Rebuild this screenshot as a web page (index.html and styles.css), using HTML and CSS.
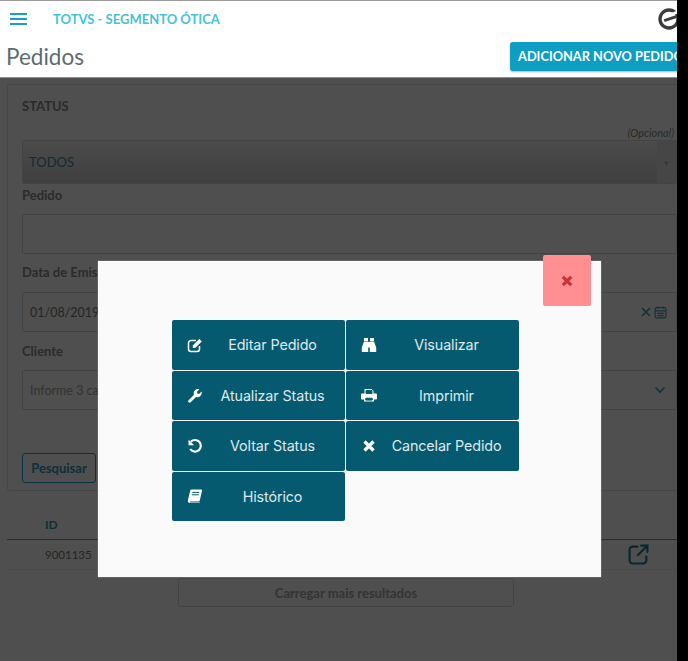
FILE: index.html
```html
<!DOCTYPE html>
<html lang="pt">
<head>
<meta charset="utf-8">
<title>Pedidos</title>
<link rel="stylesheet" href="styles.css">
</head>
<body>
<div class="page">
  <header class="top">
    <div class="brandbar">
      <svg class="burger" viewBox="0 0 17 12"><path d="M0 1h17M0 6h17M0 11h17"/></svg>
      <span class="brand">TOTVS - SEGMENTO ÓTICA</span>
      <svg class="logo" viewBox="0 0 20 20"><circle cx="10" cy="10" r="7.500"/><path class="logo-gap" d="M11 6.500 19 3.500"/><path class="logo-bar" d="M6 11.300 16 8"/></svg>
    </div>
    <div class="titlebar">
      <h1 class="title">Pedidos</h1>
      <button class="add">ADICIONAR NOVO PEDIDO</button>
    </div>
  </header>
  <main class="content">
    <section class="card">
      <div class="label status">STATUS</div>
      <div class="optional">(Opcional)</div>
      <div class="select"><span>TODOS</span><i class="select-btn">▾</i></div>
      <div class="label l-pedido">Pedido</div>
      <div class="input i-pedido"></div>
      <div class="label l-data">Data de Emissão</div>
      <div class="input i-data">01/08/2019
        <span class="date-icons">
          <svg viewBox="0 0 10 10"><path d="M1 1 9 9M9 1 1 9"/></svg>
          <svg class="cal" viewBox="0 0 12 12"><rect x="1" y="1.500" width="10" height="9.500" rx="1.500"/><path d="M1 4.500h10M3 6.800h6M3 8.800h6M3.500 .5v2M8.500 .5v2"/></svg>
        </span>
      </div>
      <div class="label l-cliente">Cliente</div>
      <div class="input i-cliente placeholder">Informe 3 caracteres
        <svg class="chev" viewBox="0 0 12 8"><path d="M1.500 1.500 6 6l4.500-4.500"/></svg>
      </div>
      <button class="search">Pesquisar</button>
    </section>
    <section class="table">
      <div class="thead">ID</div>
      <div class="trow">9001135
        <svg class="open" viewBox="0 0 20 20"><path d="M9 2.500H4.500a3 3 0 0 0-3 3v10a3 3 0 0 0 3 3h10a3 3 0 0 0 3-3V12"/><path d="M9.500 10.500 18 2M12.500 1.500H18.500V7.500"/></svg>
      </div>
    </section>
    <button class="more">Carregar mais resultados</button>
  </main>
  <div class="overlay"></div>
  <div class="modal">
    <button class="close"><svg viewBox="0 0 10 10"><path d="M1.500 1.500 8.500 8.500M8.500 1.500 1.500 8.500"/></svg></button>
    <div class="actions">
      <button class="action">
        <svg class="ico" viewBox="0 0 16 16"><path class="line" d="M12.500 9v3a2.500 2.500 0 0 1-2.500 2.500H4A2.500 2.500 0 0 1 1.500 12V6A2.500 2.500 0 0 1 4 3.500h5"/><path d="M6 8.200 12.300 2l2.500 2.500L8.500 10.700 5.700 11z"/></svg>
        <span>Editar Pedido</span></button>
      <button class="action">
        <svg class="ico" viewBox="0 0 16 16"><path d="M3 1h4v3H3zM9 1h4v3H9zM3 4.500H7.200V15H.8V10.500zM8.800 4.500H13L15.200 10.500V15H8.800zM7 5h2v5.500H7z"/></svg>
        <span>Visualizar</span></button>
      <button class="action">
        <svg class="ico" viewBox="0 0 16 16"><path d="M1.500 13.300 7 7.700A4.200 4.200 0 0 1 12.400 2.300L10 4.700l.4 1.700 1.700.5 2.400-2.300A4.300 4.300 0 0 1 9 10L3.700 15.300a1.500 1.500 0 0 1-2.200-2z"/></svg>
        <span>Atualizar Status</span></button>
      <button class="action">
        <svg class="ico" viewBox="0 0 16 16"><path d="M3.500 6.500V2h7l2 2v2.500H15a1 1 0 0 1 1 1V11.500a1 1 0 0 1-1 1h-2V14.500H3V12.500H1a1 1 0 0 1-1-1V7.500a1 1 0 0 1 1-1z"/><path class="cut" d="M5 3.500h6v3H5zM4.800 11.200h6.400v1.900H4.800z"/></svg>
        <span>Imprimir</span></button>
      <button class="action">
        <svg class="ico stroke" viewBox="0 0 16 16"><path d="M3.800 3.800A5.800 5.800 0 1 1 3.200 11"/><path class="fillhead" d="M1.500 1.700 7.200 7.200 1.500 7.200z"/></svg>
        <span>Voltar Status</span></button>
      <button class="action">
        <svg class="ico stroke-x" viewBox="0 0 16 16"><path d="M3.500 3.500 12.500 12.500M12.500 3.500 3.500 12.500"/></svg>
        <span>Cancelar Pedido</span></button>
      <button class="action">
        <svg class="ico" viewBox="0 0 16 16"><path d="M4.500 1.500H14a1 1 0 0 1 1 1.200L12.800 12.500a1.500 1.500 0 0 1-1.400 1H3.300c-.7 0-.8.900 0 .9H13l-.2.600H3c-1.800 0-2.500-1.700-2-3.300L3.200 2.700a1.500 1.500 0 0 1 1.300-1.200z"/><path class="cut" d="M5.300 4.400h7M4.800 6.800h7"/></svg>
        <span>Histórico</span></button>
    </div>
  </div>
</div>
</body>
</html>
```
FILE: styles.css
```css
* { box-sizing: border-box; }
html, body { margin: 0; height: 100%; background: #000; }
body { font-family: "Lato", "Open Sans", sans-serif; overflow: hidden; }
button { font-family: inherit; cursor: pointer; }

.page {
  position: relative;
  width: 677px;
  height: 661px;
  overflow: hidden;
  background: #fff;
}

.top {
  position: relative;
  z-index: 2;
  height: 77px;
  background: #fff;
  border-top: 1px solid #9a9a9a;
  box-shadow: 0 1px 0 #8d8d8d;
}
.brandbar { display: flex; align-items: center; height: 35px; padding-left: 10px; }
.burger { width: 17px; height: 12px; fill: none; stroke: #1a9fc4; stroke-width: 2; }
.brand { margin-left: 26px; font-size: 13px; font-weight: 700; color: #45c3d6; }
.logo {
  margin-left: auto; margin-right: -4px;
  width: 24px; height: 24px; fill: none; stroke: #3c3c3c; stroke-width: 2.800;
}
.logo .logo-gap { stroke: #fff; stroke-width: 2.500; }
.logo .logo-bar { stroke-width: 2.400; }
.titlebar { display: flex; align-items: center; height: 40px; padding-left: 6px; }
.title { margin: 0; font-size: 22.500px; font-weight: 400; color: #5d6b70; }
.add {
  margin-left: auto; margin-right: -30px;
  width: 197px; height: 29px;
  padding: 0 0 0 8px;
  border: 0; border-radius: 3px;
  background: #0e9ec2;
  color: #fff;
  font-size: 12.800px; font-weight: 700;
  text-align: left;
  white-space: nowrap;
  box-shadow: 0 1px 2px rgba(0,0,0,.3);
}

.content { padding: 7px 0 0 7px; width: 720px; }
.card {
  width: 713px; height: 407px;
  padding: 13px 0 0 14px;
  border: 1px solid #e0e0e0;
  border-radius: 2px;
}
.label { font-size: 13px; font-weight: 700; color: #8a8a8a; line-height: 16px; }
.optional {
  width: 652px; margin-top: 13px;
  text-align: right; font-size: 11px; font-style: italic; line-height: 12px; color: #8a8a8a;
}
.select {
  display: flex; align-items: center; justify-content: space-between;
  width: 655px; height: 44px; margin-top: 1px; padding-left: 6px;
  border: 1px solid #d8d8d8; border-radius: 2px;
  background: linear-gradient(#f2f2f2, #ccc);
  font-size: 13px; color: #3f8aa5;
}
.select-btn {
  width: 19px; height: 100%;
  display: flex; align-items: center; justify-content: center;
  background: #e0e2e6; color: #b0b0b0; font-style: normal; font-size: 9px;
}
.input {
  display: flex; align-items: center;
  width: 655px; height: 40px; padding-left: 7px;
  border: 1px solid #d8d8d8; border-radius: 2px;
  font-size: 12.500px; color: #777;
}
.l-pedido { margin-top: 3px; }
.i-pedido { margin-top: 11px; }
.l-data { margin-top: 10px; }
.i-data { margin-top: 12px; }
.l-cliente { margin-top: 11px; }
.i-cliente { margin-top: 11px; }
.placeholder { color: #a4a4a4; }
.date-icons { margin-left: auto; margin-right: 9px; display: flex; align-items: center; gap: 3px; }
.date-icons svg { width: 10px; height: 10px; fill: none; stroke: #3f9db8; stroke-width: 1.600; }
.date-icons .cal { width: 13px; height: 13px; stroke-width: 1.100; }
.chev {
  margin-left: auto; margin-right: 10px;
  width: 12px; height: 8px; fill: none; stroke: #3f9db8; stroke-width: 1.600;
}
.search {
  display: block;
  margin-top: 43px;
  width: 74px; height: 30px; padding: 0;
  border: 1px solid #16a5c8; border-radius: 3px;
  background: #fff;
  color: #2e9ab6;
  font-size: 13px; font-weight: 700;
}

.table { width: 680px; margin-top: 14px; }
.thead {
  height: 35px; padding: 13px 0 0 38px;
  border-bottom: 1px solid #2faec9;
  font-size: 12px; font-weight: 700; color: #2e9ab6; line-height: 14px;
}
.trow {
  position: relative;
  display: flex; align-items: center;
  height: 30px; padding-left: 38px;
  border-bottom: 1px solid #efefef;
  font-size: 11.500px; color: #777;
}
.open {
  position: absolute; left: 621px; top: 4px;
  width: 21px; height: 21px; fill: none; stroke: #0f7f9d; stroke-width: 2; stroke-linecap: round;
}
.more {
  display: block;
  width: 336px; height: 29px; margin: 8px 0 0 171px; padding: 0;
  border: 1px solid #d8d8d8; border-radius: 3px;
  background: #fff;
  color: #a8a8a8;
  font-size: 13px; font-weight: 700;
}

.overlay {
  position: absolute; inset: 77px 0 0 0;
  z-index: 1;
  background: rgba(0,0,0,.69);
}

.modal {
  position: absolute; left: 98px; top: 261px;
  z-index: 3;
  width: 503px; height: 316px;
  padding: 59px 0 0 74px;
  background: #fafafa;
  box-shadow: 0 0 1px rgba(255,255,255,.7);
}
.close {
  position: absolute; left: 445px; top: -6px;
  display: flex; align-items: center; justify-content: center;
  width: 48px; height: 51px; padding: 0;
  border: 0; border-radius: 2px;
  background: #ff8f90;
}
.close svg { width: 12px; height: 12px; fill: none; stroke: #c93138; stroke-width: 2.600; }

.actions {
  display: grid;
  grid-template-columns: 173px 173px;
  grid-auto-rows: 49.500px;
  gap: 1px;
}
.action {
  display: flex; align-items: center;
  padding: 0 15px;
  border: 0; border-radius: 2px;
  background: #055a70;
  color: #dfe9ec;
  font-family: "Inter", "Roboto", sans-serif;
  font-size: 14.300px; font-weight: 400;
}
.action span { flex: 1; text-align: center; padding-left: 12px; white-space: nowrap; letter-spacing: -.1px; }
.ico { flex: none; width: 16px; height: 16px; fill: #fff; }
.ico .line { fill: none; stroke: #fff; stroke-width: 1.500; }
.ico .cut { fill: #055a70; stroke: #055a70; stroke-width: 1; }
.ico.stroke { fill: none; stroke: #fff; stroke-width: 2.200; }
.ico.stroke .fillhead { fill: #fff; stroke: none; }
.ico.stroke-x { fill: none; stroke: #fff; stroke-width: 3.200; }
```
